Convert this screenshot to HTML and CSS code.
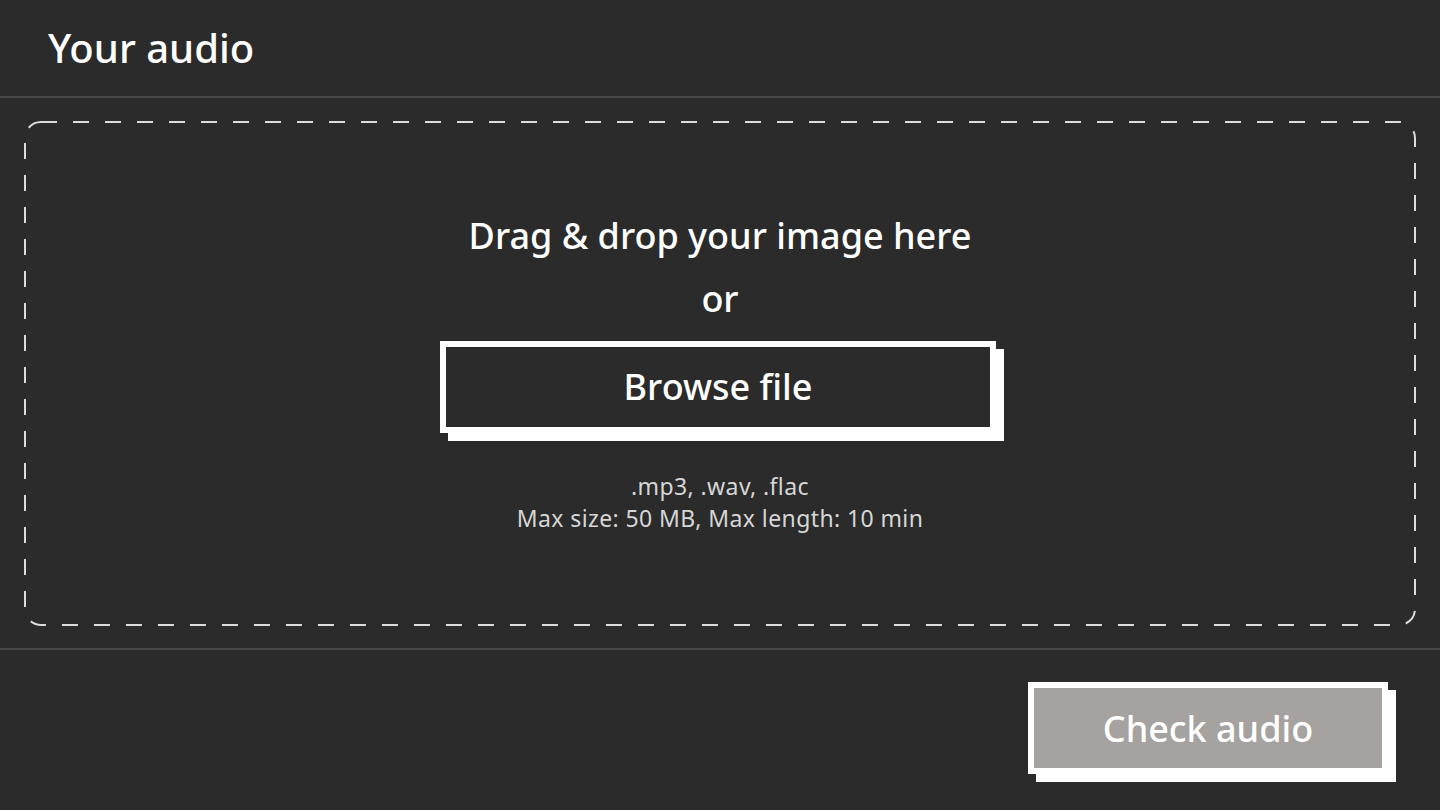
FILE: index.html
```html
<!DOCTYPE html>
<html lang="en">
<head>
    <meta charset="UTF-8">
    <meta name="viewport" content="width=device-width, initial-scale=1.0">
    <title>Your audio</title>
    <link rel="stylesheet" href="styles.css">
</head>
<body>
    <header class="panel-header">
        <h1>Your audio</h1>
    </header>

    <main class="panel-body">
        <div class="dropzone">
            <svg class="dropzone-border" aria-hidden="true">
                <rect class="dropzone-rect" rx="16" ry="16"></rect>
            </svg>
            <p class="drop-title">Drag &amp; drop your image here</p>
            <p class="drop-or">or</p>
            <button class="btn btn-outline">Browse file</button>
            <p class="drop-hint">.mp3, .wav, .flac<br>Max size: 50 MB, Max length: 10 min</p>
        </div>
    </main>

    <footer class="panel-footer">
        <button class="btn btn-muted">Check audio</button>
    </footer>
</body>
</html>
```

FILE: styles.css
```css
body {
    margin: 0;
    font-family: 'Noto Sans', 'Lato', sans-serif;
    background: #2b2b2b;
    color: #fff;
    height: 810px;
    overflow: hidden;
}

.panel-header {
    height: 96px;
    padding: 0 48px;
    display: flex;
    align-items: center;
    border-bottom: 2px solid #484848;
}

.panel-header h1 {
    margin: 0 0 2px;
    font-size: 40px;
    font-weight: 500;
}

.panel-body {
    padding: 23px 24px 22px;
    border-bottom: 2px solid #484848;
}

.dropzone {
    position: relative;
    height: 505px;
    display: flex;
    flex-direction: column;
    align-items: center;
    justify-content: center;
}

/* dashed outline drawn as svg so the dash length matches */
.dropzone-border {
    position: absolute;
    inset: 0;
    width: 100%;
    height: 100%;
    pointer-events: none;
}

.dropzone-rect {
    x: 1px;
    y: 1px;
    width: calc(100% - 2px);
    height: calc(100% - 2px);
    fill: none;
    stroke: #dcdcdc;
    stroke-width: 2;
    stroke-dasharray: 16 16;
}

.drop-title {
    margin: 0;
    font-size: 36px;
    line-height: 44px;
    font-weight: 500;
}

.drop-or {
    margin: 19px 0 0;
    font-size: 36px;
    line-height: 44px;
    font-weight: 500;
}

.drop-hint {
    margin: 37px 0 0;
    font-size: 23px;
    line-height: 32px;
    letter-spacing: 0.4px;
    color: #d6d6d6;
    text-align: center;
}

.btn {
    font-family: inherit;
    font-weight: 500;
    color: #fff;
    border: 6px solid #fff;
    box-shadow: 8px 8px 0 #fff;
    cursor: pointer;
}

.btn-outline {
    margin: 20px 4px 0 0;
    width: 556px;
    height: 92px;
    background: #2b2b2b;
    font-size: 36px;
}

.btn-muted {
    width: 360px;
    height: 92px;
    background: #a5a2a0;
    font-size: 36px;
}

.panel-footer {
    display: flex;
    justify-content: flex-end;
    padding: 32px 52px 0;
}
```
